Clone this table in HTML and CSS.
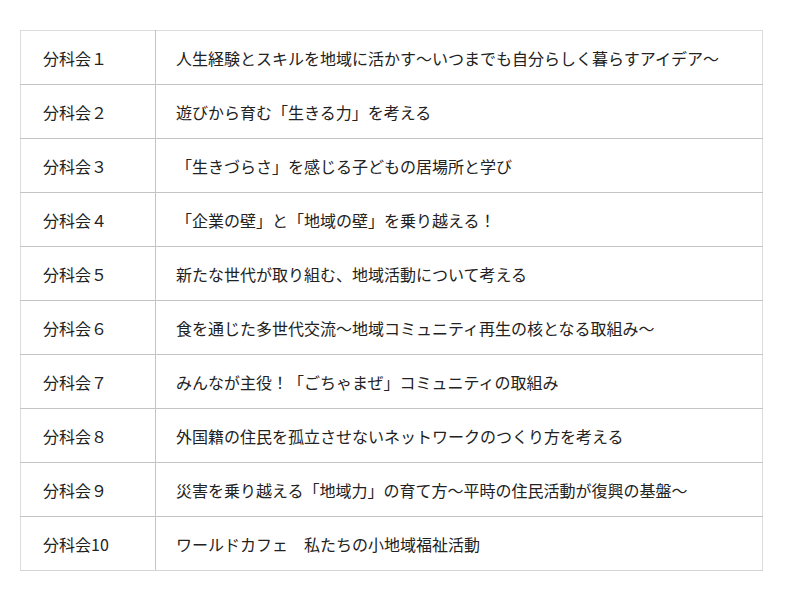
FILE: index.html
```html
<!DOCTYPE html>
<html lang="ja">
<head>
<meta charset="utf-8">
<title>分科会一覧</title>
<link rel="stylesheet" href="styles.css">
</head>
<body>
<table class="sessions">
  <tbody>
    <tr><td class="num">分科会１</td><td class="title">人生経験とスキルを地域に活かす〜いつまでも自分らしく暮らすアイデア〜</td></tr>
    <tr><td class="num">分科会２</td><td class="title">遊びから育む「生きる力」を考える</td></tr>
    <tr><td class="num">分科会３</td><td class="title">「生きづらさ」を感じる子どもの居場所と学び</td></tr>
    <tr><td class="num">分科会４</td><td class="title">「企業の壁」と「地域の壁」を乗り越える！</td></tr>
    <tr><td class="num">分科会５</td><td class="title">新たな世代が取り組む、地域活動について考える</td></tr>
    <tr><td class="num">分科会６</td><td class="title">食を通じた多世代交流〜地域コミュニティ再生の核となる取組み〜</td></tr>
    <tr><td class="num">分科会７</td><td class="title">みんなが主役！「ごちゃまぜ」コミュニティの取組み</td></tr>
    <tr><td class="num">分科会８</td><td class="title">外国籍の住民を孤立させないネットワークのつくり方を考える</td></tr>
    <tr><td class="num">分科会９</td><td class="title">災害を乗り越える「地域力」の育て方〜平時の住民活動が復興の基盤〜</td></tr>
    <tr><td class="num">分科会10</td><td class="title">ワールドカフェ　私たちの小地域福祉活動</td></tr>
  </tbody>
</table>
</body>
</html>
```
FILE: styles.css
```css
html, body {
  margin: 0;
  padding: 0;
  background: #fff;
}
body {
  padding: 30px 0 0 20px;
  font-family: "Noto Sans CJK JP", "Noto Sans", sans-serif;
  font-size: 16px;
  color: #222;
}
.sessions {
  border-collapse: collapse;
  width: 743px;
  border: 1px solid #dcdcdc;
}
.sessions tr {
  height: 54px;
}
.sessions td {
  padding: 1px 20px 0 20px;
  border-bottom: 1px solid #c4c4c4;
  vertical-align: middle;
  white-space: nowrap;
  line-height: 20px;
}
.sessions tr:last-child td {
  border-bottom: 1px solid #d4d4d4;
}
.sessions .num {
  width: 92px;
  padding-left: 22px;
  border-right: 1px solid #c4c4c4;
}
```
